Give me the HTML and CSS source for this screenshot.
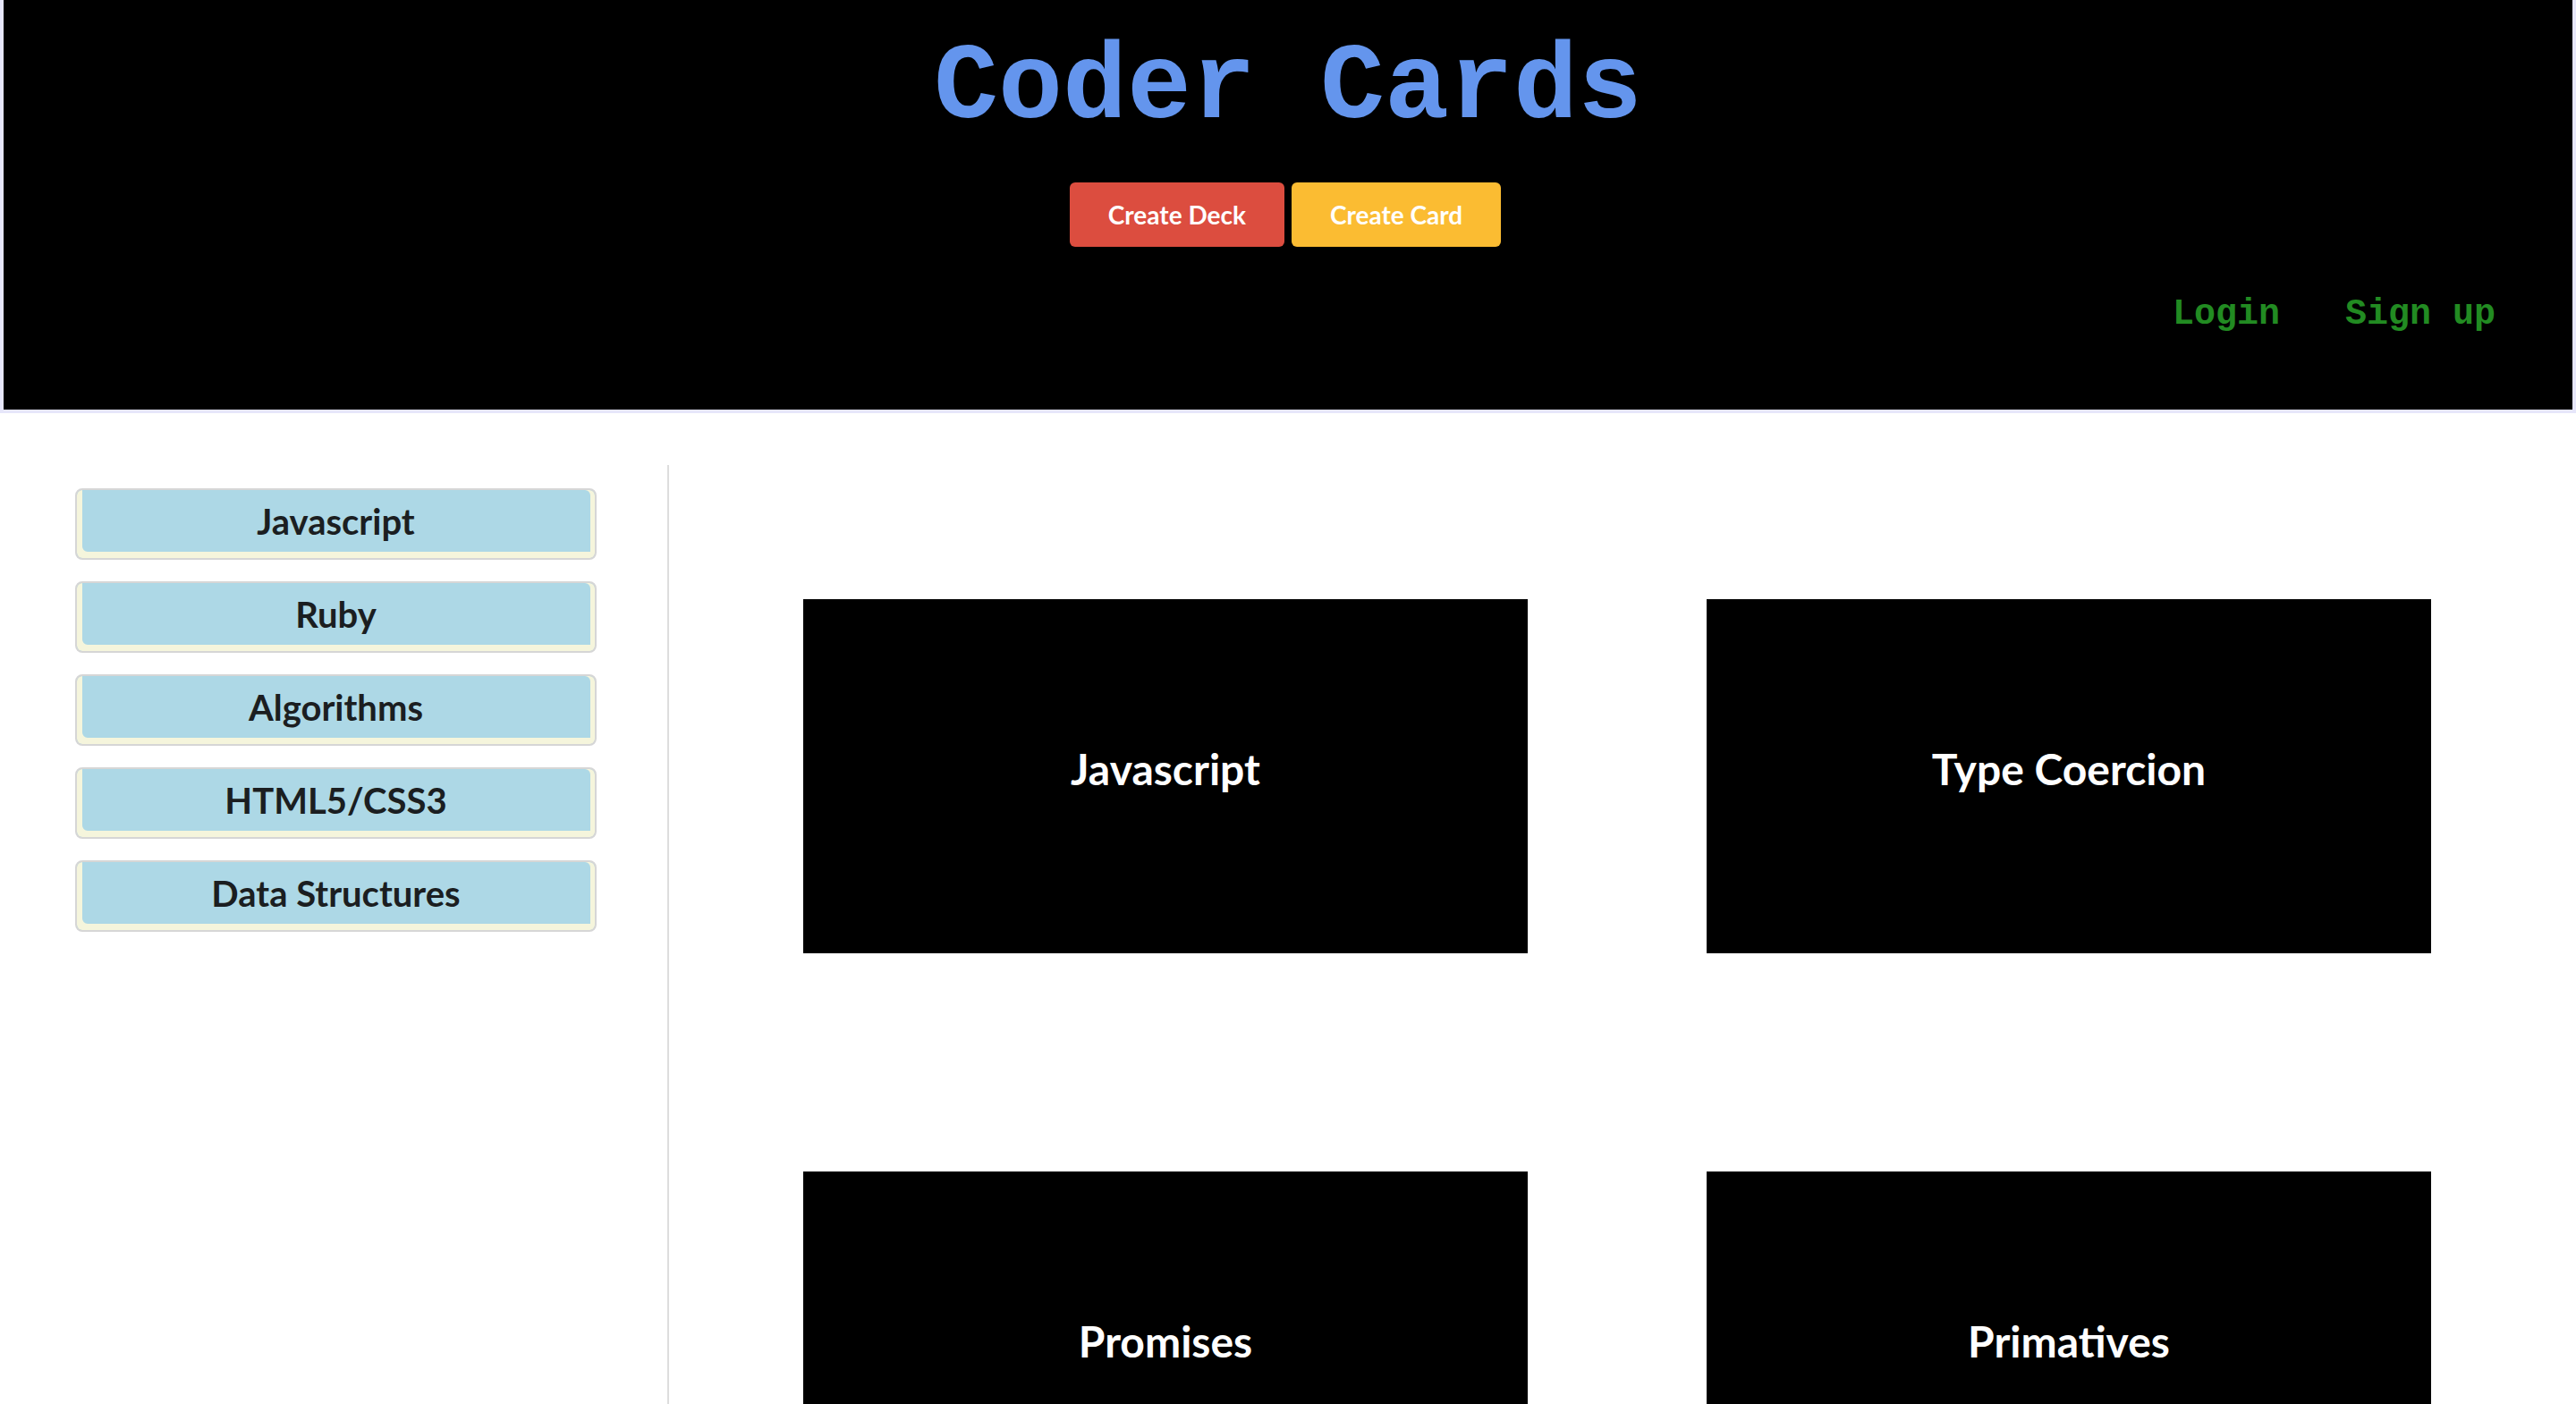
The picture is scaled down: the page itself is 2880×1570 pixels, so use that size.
FILE: index.html
```html
<!DOCTYPE html>
<html lang="en">
<head>
<meta charset="utf-8">
<title>Coder Cards</title>
<link rel="stylesheet" href="styles.css">
</head>
<body>
<header class="site-header">
  <h1 class="brand">Coder Cards</h1>
  <div class="actions">
    <button class="btn btn-deck">Create Deck</button>
    <button class="btn btn-card">Create Card</button>
  </div>
  <nav class="auth">
    <a class="auth-link" href="#">Login</a>
    <a class="auth-link" href="#">Sign up</a>
  </nav>
</header>
<main class="layout">
  <aside class="sidebar">
    <div class="deck"><span class="deck-label">Javascript</span></div>
    <div class="deck"><span class="deck-label">Ruby</span></div>
    <div class="deck"><span class="deck-label">Algorithms</span></div>
    <div class="deck"><span class="deck-label">HTML5/CSS3</span></div>
    <div class="deck"><span class="deck-label">Data Structures</span></div>
  </aside>
  <section class="cards">
    <div class="card"><span class="card-title">Javascript</span></div>
    <div class="card"><span class="card-title">Type Coercion</span></div>
    <div class="card"><span class="card-title">Promises</span></div>
    <div class="card"><span class="card-title">Primatives</span></div>
  </section>
</main>
</body>
</html>
```
FILE: styles.css
```css
html, body {
  margin: 0;
  padding: 0;
  background: #ffffff;
}

.site-header {
  background: #000000;
  height: 458px;
  border-left: 4px solid #e6e6fa;
  border-right: 4px solid #e6e6fa;
  border-bottom: 4px solid #e6e6fa;
  display: flex;
  flex-direction: column;
}

.brand {
  margin: 31px 0 0;
  font-family: "Liberation Mono", "Courier New", monospace;
  font-weight: 700;
  font-size: 120px;
  line-height: 136px;
  color: #6495ed;
  text-align: center;
}

.actions {
  margin-top: 37px;
  display: flex;
  justify-content: center;
  gap: 8px;
  padding-right: 6px;
}

.btn {
  height: 72px;
  padding: 0 43px;
  border: 0;
  border-radius: 6px;
  font-family: Lato, "Liberation Sans", sans-serif;
  font-size: 28px;
  font-weight: 700;
  color: #ffffff;
  line-height: 72px;
}

.btn-deck {
  background: #dc4d3f;
}

.btn-card {
  background: #fbbc32;
}

.auth {
  margin-top: 53px;
  display: flex;
  justify-content: flex-end;
  gap: 73px;
  padding-right: 86px;
}

.auth-link {
  font-family: "Liberation Mono", "Courier New", monospace;
  font-weight: 700;
  font-size: 40px;
  color: #228b22;
  text-decoration: none;
}

.layout {
  display: flex;
  margin-top: 58px;
}

.sidebar {
  width: 583px;
  padding: 26px 79px 0 84px;
  display: flex;
  flex-direction: column;
  gap: 24px;
}

.deck {
  box-sizing: border-box;
  height: 80px;
  border: 2px solid #d6d6d6;
  border-radius: 8px;
  background: #add8e6;
  box-shadow: inset 6px -7px 0 #f5f5dc, inset -5px 0 0 #f5f5dc;
  display: flex;
  align-items: center;
  justify-content: center;
  padding-bottom: 7px;
}

.deck-label {
  font-family: Lato, "Liberation Sans", sans-serif;
  font-size: 40px;
  font-weight: 700;
  color: #1b1e21;
}

.cards {
  flex: 1;
  border-left: 2px solid #dddddd;
  padding: 150px 0 0 150px;
  display: grid;
  grid-template-columns: 810px 810px;
  column-gap: 200px;
  row-gap: 244px;
  align-content: start;
}

.card {
  height: 396px;
  background: #000000;
  display: flex;
  justify-content: center;
  align-items: flex-start;
  padding-top: 161px;
  box-sizing: border-box;
}

.card-title {
  font-family: Lato, "Liberation Sans", sans-serif;
  font-size: 48px;
  font-weight: 700;
  color: #ffffff;
}
```
